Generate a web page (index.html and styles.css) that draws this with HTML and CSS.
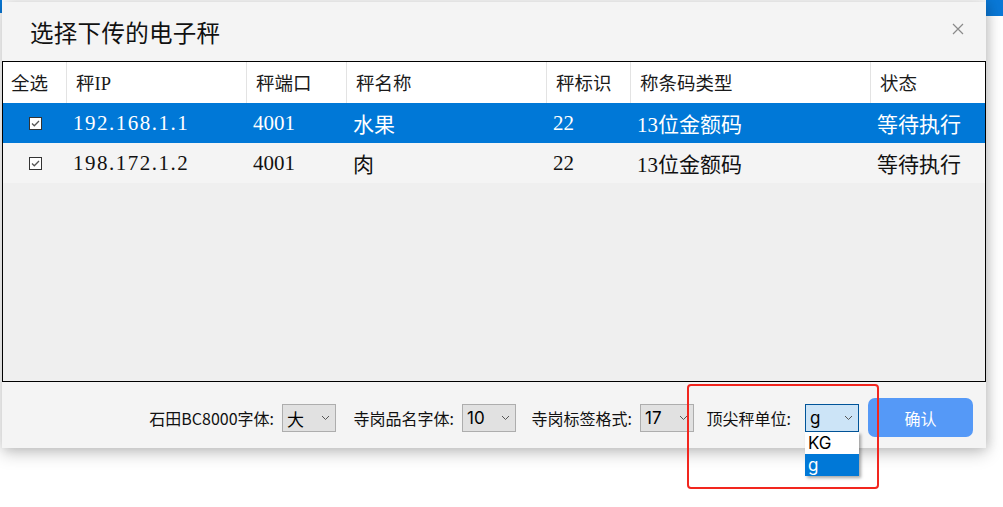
FILE: index.html
```html
<!DOCTYPE html>
<html lang="zh">
<head>
<meta charset="utf-8">
<title>选择下传的电子秤</title>
<link rel="stylesheet" href="styles.css">
</head>
<body>
<div class="screen">
  <div class="backdrop backdrop-left"></div>
  <div class="backdrop backdrop-right"></div>

  <div class="dialog">
    <div class="dlg-head">
      <h1 class="dlg-title">选择下传的电子秤</h1>
      <span class="dlg-close" aria-label="关闭">
        <svg width="12" height="12" viewBox="0 0 12 12"><path d="M1 1L11 11M11 1L1 11" stroke="#8a8a8a" stroke-width="1.2" fill="none"/></svg>
      </span>
    </div>

    <div class="grid">
      <div class="row row-head">
        <div class="cell">全选</div>
        <div class="cell">秤IP</div>
        <div class="cell">秤端口</div>
        <div class="cell">秤名称</div>
        <div class="cell">秤标识</div>
        <div class="cell">称条码类型</div>
        <div class="cell">状态</div>
      </div>
      <div class="row row-selected">
        <div class="cell cell-check"><span class="check"><svg width="11" height="11" viewBox="0 0 11 11"><path d="M2 5.5L4.3 7.8L9 3" stroke="#555" stroke-width="1.3" fill="none"/></svg></span></div>
        <div class="cell ip">192.168.1.1</div>
        <div class="cell">4001</div>
        <div class="cell">水果</div>
        <div class="cell">22</div>
        <div class="cell">13位金额码</div>
        <div class="cell">等待执行</div>
      </div>
      <div class="row row-alt">
        <div class="cell cell-check"><span class="check"><svg width="11" height="11" viewBox="0 0 11 11"><path d="M2 5.5L4.3 7.8L9 3" stroke="#555" stroke-width="1.3" fill="none"/></svg></span></div>
        <div class="cell ip">198.172.1.2</div>
        <div class="cell">4001</div>
        <div class="cell">肉</div>
        <div class="cell">22</div>
        <div class="cell">13位金额码</div>
        <div class="cell">等待执行</div>
      </div>
    </div>

    <div class="footer">
      <label class="f-label f-label-1">石田BC8000字体:</label>
      <div class="select"><span class="select-val">大</span><svg class="chev" width="9" height="6" viewBox="0 0 9 6"><path d="M1 1L4.5 4.5L8 1" stroke="#555" stroke-width="1" fill="none"/></svg></div>
      <label class="f-label f-label-2">寺岗品名字体:</label>
      <div class="select"><span class="select-val">10</span><svg class="chev" width="9" height="6" viewBox="0 0 9 6"><path d="M1 1L4.5 4.5L8 1" stroke="#555" stroke-width="1" fill="none"/></svg></div>
      <label class="f-label f-label-3">寺岗标签格式:</label>
      <div class="select"><span class="select-val">17</span><svg class="chev" width="9" height="6" viewBox="0 0 9 6"><path d="M1 1L4.5 4.5L8 1" stroke="#555" stroke-width="1" fill="none"/></svg></div>
      <label class="f-label f-label-4">顶尖秤单位:</label>
      <div class="select select-open"><span class="select-val">g</span><svg class="chev" width="9" height="6" viewBox="0 0 9 6"><path d="M1 1L4.5 4.5L8 1" stroke="#555" stroke-width="1" fill="none"/></svg>
        <ul class="dropdown">
          <li class="opt">KG</li>
          <li class="opt opt-active">g</li>
        </ul>
      </div>
      <button class="btn-confirm">确认</button>
    </div>
  </div>

  <div class="annotation"></div>
</div>
</body>
</html>
```

FILE: styles.css
```css
* { box-sizing: border-box; }

html, body {
  margin: 0;
  padding: 0;
  background: #ffffff;
}

.screen {
  position: relative;
  width: 1003px;
  height: 507px;
  overflow: hidden;
  padding: 2px 0 0 2px;
  font-family: "Noto Sans CJK SC", "Noto Sans", sans-serif;
  color: #111;
}

.backdrop {
  position: absolute;
  top: 0;
  background: #0a78d6;
}
.backdrop-left { left: 0; width: 2px; height: 13px; }
.backdrop-right { left: 986px; width: 17px; height: 16px; }

.dialog {
  position: relative;
  width: 984px;
  height: 446px;
  background: #f4f4f4;
  box-shadow: 0 5px 16px rgba(0, 0, 0, 0.22), 2px 0 10px rgba(0, 0, 0, 0.12);
  display: flex;
  flex-direction: column;
}

.dlg-head {
  height: 59px;
  padding: 0 22px 0 28px;
  display: flex;
  align-items: center;
  justify-content: space-between;
}

.dlg-title {
  margin: 0;
  font-size: 23.5px;
  font-weight: 400;
  color: #111;
  letter-spacing: 0.3px;
}

.dlg-close {
  display: flex;
  margin-top: -6px;
}

.grid {
  height: 321px;
  border: 1px solid #000;
  background: #efefef;
  font-family: "Liberation Serif", "Noto Sans CJK SC", serif;
}

.row {
  display: grid;
  grid-template-columns: 64px 180px 100px 200px 84px 240px 1fr;
  height: 40px;
  align-items: center;
  font-size: 21px;
  color: #111;
}

.row .cell {
  white-space: nowrap;
  padding-left: 6px;
  height: 100%;
  display: flex;
  align-items: center;
}

.row-head {
  height: 41px;
  background: #ffffff;
  font-size: 18.5px;
  color: #1a1a1a;
}
.row-head .cell {
  padding-left: 9px;
  padding-bottom: 2px;
  border-right: 1px solid #e3e3e3;
}
.row-head .cell:first-child { padding-left: 8px; }
.row-head .cell:last-child { border-right: none; }

.row-selected {
  background: #0078d7;
  color: #ffffff;
}

.row-alt {
  background: #f4f4f4;
}

.ip { letter-spacing: 1.5px; }

.cell-check {
  justify-content: center;
  padding-left: 0 !important;
}

.check {
  width: 13px;
  height: 13px;
  background: #ffffff;
  border: 1px solid #333;
  display: flex;
  align-items: center;
  justify-content: center;
}

.footer {
  flex: 1;
  display: flex;
  align-items: center;
  justify-content: flex-end;
  padding: 6px 13px 0 0;
  font-size: 16px;
  color: #111;
}

.f-label {
  white-space: nowrap;
  text-align: right;
}
.f-label-1 { width: 127px; }
.f-label-2 { width: 103px; margin-left: 15px; }
.f-label-3 { width: 103px; margin-left: 13px; }
.f-label-4 { width: 87px; margin-left: 10px; }

.select {
  position: relative;
  width: 54px;
  height: 28px;
  margin-left: 8px;
  background: #e1e1e1;
  border: 1px solid #adadad;
  display: flex;
  align-items: center;
  justify-content: space-between;
  padding: 0 5px 0 4px;
  font-family: "Inter", "Noto Sans CJK SC", sans-serif;
  font-size: 17px;
  color: #000;
}

.select-open {
  margin-left: 14px;
  background: #cce4f7;
  border-color: #005499;
}

.chev { flex: none; }

.dropdown {
  position: absolute;
  top: 27px;
  left: -1px;
  width: 54px;
  margin: 0;
  padding: 0;
  list-style: none;
  background: #ffffff;
  box-shadow: 2px 2px 3px rgba(0, 0, 0, 0.35);
  font-size: 17px;
}

.opt {
  height: 22px;
  line-height: 1;
  display: flex;
  align-items: center;
  padding-left: 3px;
  overflow: hidden;
  color: #000;
}

.opt-active {
  background: #0078d7;
  color: #ffffff;
}

.btn-confirm {
  width: 105px;
  height: 39px;
  margin-left: 9px;
  margin-top: -1px;
  border: none;
  border-radius: 7px;
  background: #5599f7;
  color: #ffffff;
  font-family: "Noto Sans CJK SC", "Noto Sans", sans-serif;
  font-size: 16px;
}

.annotation {
  position: absolute;
  left: 687px;
  top: 384px;
  width: 192px;
  height: 105px;
  border: 2.5px solid #f2261e;
  border-radius: 4px;
  pointer-events: none;
}
```
